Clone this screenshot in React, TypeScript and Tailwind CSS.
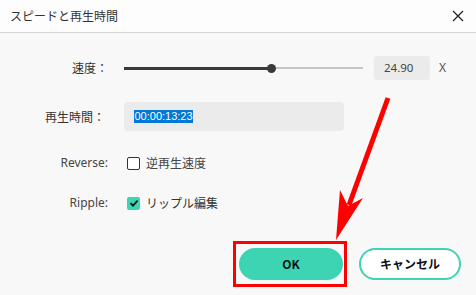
import React from 'react';

const jp = { fontFamily: '"Noto Sans CJK JP", "Noto Sans", sans-serif' };

function Checkbox({ checked }: { checked?: boolean }) {
  if (checked) {
    return (
      <span className="w-[13px] h-[13px] rounded-[2px] bg-[#3dd4b4] flex items-center justify-center">
        <svg width="10" height="10" viewBox="0 0 10 10">
          <path d="M1.5 5.2 L4 7.6 L8.6 2.6" fill="none" stroke="#111" strokeWidth="1.8" />
        </svg>
      </span>
    );
  }
  return <span className="w-[13px] h-[13px] rounded-[2px] border-[1.5px] border-[#333] bg-white" />;
}

export default function App() {
  return (
    <div className="relative w-[476px] h-[295px] bg-[#f8f8f8] text-[#333] overflow-hidden" style={jp}>
      <div className="h-[33px] bg-[#fdfdfd] border-b border-[#d4d4d4] flex items-center justify-between pl-[10px] pr-[12px]">
        <span className="text-[12px] text-[#333]">スピードと再生時間</span>
        <svg width="12" height="12" viewBox="0 0 12 12">
          <path d="M1 1 L11 11 M11 1 L1 11" stroke="#222" strokeWidth="1.3" />
        </svg>
      </div>

      <div className="flex flex-col pt-[23px]">
        <div className="flex items-center h-[24px]">
          <div className="w-[110px] text-right text-[12px] pr-[2px]">速度：</div>
          <div className="ml-[14px] w-[239px] h-[24px] flex items-center">
            <div className="w-[147px] h-[3px] bg-[#3a3a3a]" />
            <div className="w-[9px] h-[9px] rounded-full bg-[#3a3a3a] -mx-[4px] relative" />
            <div className="flex-1 h-[2px] bg-[#c4c4c4]" />
          </div>
          <div className="ml-[11px] w-[56px] h-[24px] bg-[#ebebeb] rounded-[3px] flex items-center pl-[10px] text-[11.5px] text-[#444]" style={{ fontFamily: '"Noto Sans", sans-serif' }}>
            24.90
          </div>
          <div className="ml-[9px] text-[12px] text-[#555]" style={{ fontFamily: '"Noto Sans", sans-serif' }}>X</div>
        </div>

        <div className="flex items-center h-[29px] mt-[22px]">
          <div className="w-[110px] text-right text-[12px] pr-[5px]">再生時間：</div>
          <div className="ml-[14px] w-[220px] h-[29px] bg-[#ebebeb] rounded-[4px] flex items-center pl-[10px]">
            <span className="bg-[#0078d7] text-white text-[11px] leading-[13px] px-[0.5px]" style={{ fontFamily: '"Liberation Sans", sans-serif' }}>
              00:00:13:23
            </span>
          </div>
        </div>

        <div className="flex items-center h-[20px] mt-[22px]">
          <div className="w-[110px] text-right text-[12px] text-[#444] pr-[2px]" style={{ fontFamily: '"Noto Sans", sans-serif' }}>Reverse:</div>
          <div className="ml-[17px] flex items-center gap-[6px]">
            <Checkbox />
            <span className="text-[12px] text-[#444]">逆再生速度</span>
          </div>
        </div>

        <div className="flex items-center h-[20px] mt-[20px]">
          <div className="w-[110px] text-right text-[12px] text-[#444] pr-[2px]" style={{ fontFamily: '"Noto Sans", sans-serif' }}>Ripple:</div>
          <div className="ml-[17px] flex items-center gap-[6px]">
            <Checkbox checked />
            <span className="text-[12px] text-[#333]">リップル編集</span>
          </div>
        </div>

        <div className="flex justify-end gap-[16px] pr-[15px] mt-[35px]">
          <button className="w-[104px] h-[32px] rounded-full bg-[#3dd4b4] text-[12px] font-bold text-[#111]">OK</button>
          <button className="w-[102px] h-[32px] rounded-full border-2 border-[#3dd4b4] bg-white text-[12px] font-bold text-[#111]">キャンセル</button>
        </div>
      </div>

      <svg className="absolute inset-0 pointer-events-none" width="476" height="295" viewBox="0 0 476 295">
        <rect x="234.5" y="242.5" width="111" height="43" fill="none" stroke="#ff0000" strokeWidth="3" />
        <path d="M388 98 L349 205" stroke="#ff0000" strokeWidth="5" />
        <path d="M336 240 L340 190 L348 206 L363 198 Z" fill="#ff0000" />
      </svg>
    </div>
  );
}
